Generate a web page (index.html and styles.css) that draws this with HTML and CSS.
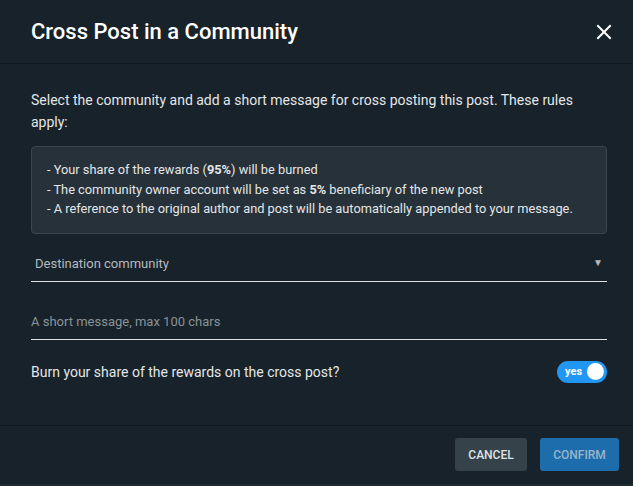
FILE: index.html
```html
<!DOCTYPE html>
<html>
<head>
<meta charset="utf-8">
<link rel="stylesheet" href="styles.css">
</head>
<body>
<div class="modal">
  <div class="header">
    <h1 class="title">Cross Post in a Community</h1>
    <svg class="close" width="16" height="16" viewBox="0 0 16 16"><path d="M2 2 L14 14 M14 2 L2 14" stroke="#fff" stroke-width="2" stroke-linecap="square"/></svg>
  </div>
  <div class="body">
    <p class="desc">Select the community and add a short message for cross posting this post. These rules apply:</p>
    <div class="rules">
      <div>- Your share of the rewards (<b>95%</b>) will be burned</div>
      <div>- The community owner account will be set as <b>5%</b> beneficiary of the new post</div>
      <div>- A reference to the original author and post will be automatically appended to your message.</div>
    </div>
    <div class="select">
      <span>Destination community</span>
      <span class="caret">▼</span>
    </div>
    <div class="input">A short message, max 100 chars</div>
    <div class="switch-row">
      <span>Burn your share of the rewards on the cross post?</span>
      <div class="switch"><span class="yes">yes</span><span class="knob"></span></div>
    </div>
  </div>
  <div class="footer">
    <button class="btn cancel">CANCEL</button>
    <button class="btn confirm">CONFIRM</button>
  </div>
</div>
</body>
</html>
```

FILE: styles.css
```css
html, body {
  margin: 0;
  padding: 0;
  background: #1f2a31;
  font-family: Roboto, "Liberation Sans", sans-serif;
}
.modal {
  width: 633px;
  height: 484px;
  background: #17222a;
  color: #e6e8ea;
  display: flex;
  flex-direction: column;
}
.header {
  height: 63px;
  border-bottom: 1px solid #101a20;
  display: flex;
  align-items: center;
  justify-content: space-between;
  padding: 0 21px 0 31px;
}
.title {
  margin: 0;
  font-size: 22px;
  font-weight: 500;
  color: #ffffff;
  letter-spacing: 0;
}
.close {
  display: block;
}
.body {
  padding: 25px 26px 0 31px;
  flex: 1;
}
.desc {
  margin: 0;
  font-size: 14px;
  line-height: 22px;
  color: #e4e6e8;
}
.rules {
  margin-top: 13px;
  background: #263139;
  border: 1px solid #3a454d;
  border-radius: 4px;
  padding: 13px 15px 14px;
  font-size: 12.8px;
  line-height: 19.5px;
  color: #e4e6e8;
}
.rules b {
  font-weight: 700;
}
.select {
  margin-top: 20px;
  display: flex;
  justify-content: space-between;
  align-items: center;
  padding: 0 4px 7px 4px;
  border-bottom: 1px solid #dfe3e6;
  font-size: 13px;
  line-height: 20px;
  color: #b4babe;
}
.caret {
  font-size: 10px;
  color: #b4babe;
  margin-top: -2px;
}
.input {
  margin-top: 30px;
  padding-bottom: 7px;
  border-bottom: 1px solid #dfe3e6;
  font-size: 13px;
  line-height: 20px;
  color: #8a9297;
}
.switch-row {
  margin-top: 21px;
  display: flex;
  justify-content: space-between;
  align-items: center;
  font-size: 14px;
  color: #e4e6e8;
}
.switch {
  width: 50px;
  height: 22px;
  border-radius: 11px;
  background: #2196f3;
  display: flex;
  align-items: center;
  justify-content: space-between;
  padding: 0 3px 0 8px;
  box-sizing: border-box;
}
.yes {
  font-size: 11px;
  font-weight: 700;
  color: #fff;
}
.knob {
  width: 17px;
  height: 17px;
  border-radius: 50%;
  background: #fff;
}
.footer {
  border-top: 1px solid #101a20;
  display: flex;
  justify-content: flex-end;
  gap: 13px;
  padding: 12px 14px 13px;
}
.btn {
  height: 33px;
  border: none;
  border-radius: 3px;
  font-family: Roboto, "Liberation Sans", sans-serif;
  font-size: 12px;
  font-weight: 500;
  padding: 0;
}
.cancel {
  width: 72px;
  background: #354249;
  color: #dfe3e6;
}
.confirm {
  width: 79px;
  background: #1d6cab;
  color: #98b5cb;
}
```
